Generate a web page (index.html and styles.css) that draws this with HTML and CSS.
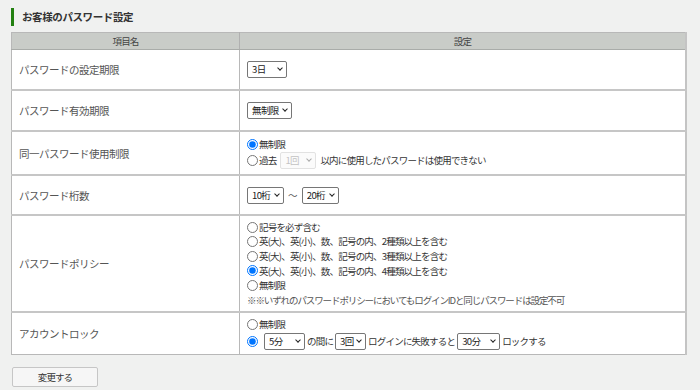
FILE: index.html
```html
<!DOCTYPE html>
<html lang="ja">
<head>
  <meta charset="UTF-8">
  <meta name="viewport" content="width=device-width, initial-scale=1.0">
  <title>お客様のパスワード設定</title>
  <link rel="stylesheet" href="styles.css">
</head>
<body>
  <div class="page">
    <h2 class="section-title">お客様のパスワード設定</h2>

    <table class="setting-table">
      <thead>
        <tr>
          <th class="col-name">項目名</th>
          <th class="col-value">設定</th>
        </tr>
      </thead>
      <tbody>
        <tr class="row-expire">
          <td class="label">パスワードの設定期限</td>
          <td class="value">
            <span class="sel-wrap">
              <select class="sel sel-days">
                <option>3日</option>
                <option>7日</option>
                <option>30日</option>
              </select>
            </span>
          </td>
        </tr>
        <tr class="row-valid">
          <td class="label">パスワード有効期限</td>
          <td class="value">
            <span class="sel-wrap">
              <select class="sel sel-valid">
                <option>無制限</option>
                <option>30日</option>
                <option>90日</option>
              </select>
            </span>
          </td>
        </tr>
        <tr class="row-reuse">
          <td class="label">同一パスワード使用制限</td>
          <td class="value">
            <label class="opt"><input type="radio" name="reuse" checked>無制限</label>
            <label class="opt"><input type="radio" name="reuse">過去
              <span class="sel-wrap is-disabled sel-gap">
                <select class="sel sel-times" disabled>
                  <option>1回</option>
                </select>
              </span>
              <span class="after-sel">以内に使用したパスワードは使用できない</span>
            </label>
          </td>
        </tr>
        <tr class="row-length">
          <td class="label">パスワード桁数</td>
          <td class="value">
            <div class="opt">
              <span class="sel-wrap">
                <select class="sel sel-len">
                  <option>10桁</option>
                </select>
              </span>
              <span class="tilde">～</span>
              <span class="sel-wrap">
                <select class="sel sel-len">
                  <option>20桁</option>
                </select>
              </span>
            </div>
          </td>
        </tr>
        <tr class="row-policy">
          <td class="label">パスワードポリシー</td>
          <td class="value">
            <label class="opt"><input type="radio" name="policy">記号を必ず含む</label>
            <label class="opt"><input type="radio" name="policy">英(大)、英(小)、数、記号の内、2種類以上を含む</label>
            <label class="opt"><input type="radio" name="policy">英(大)、英(小)、数、記号の内、3種類以上を含む</label>
            <label class="opt"><input type="radio" name="policy" checked>英(大)、英(小)、数、記号の内、4種類以上を含む</label>
            <label class="opt"><input type="radio" name="policy">無制限</label>
            <p class="note">※※いずれのパスワードポリシーにおいてもログインIDと同じパスワードは設定不可</p>
          </td>
        </tr>
        <tr class="row-lock">
          <td class="label">アカウントロック</td>
          <td class="value">
            <label class="opt"><input type="radio" name="lock">無制限</label>
            <div class="opt lock-line">
              <input type="radio" name="lock" checked>
              <span class="sel-wrap sel-gap">
                <select class="sel sel-min">
                  <option>5分</option>
                </select>
              </span>
              <span>の間に</span>
              <span class="sel-wrap">
                <select class="sel sel-count">
                  <option>3回</option>
                </select>
              </span>
              <span>ログインに失敗すると</span>
              <span class="sel-wrap">
                <select class="sel sel-lock">
                  <option>30分</option>
                </select>
              </span>
              <span>ロックする</span>
            </div>
          </td>
        </tr>
      </tbody>
    </table>

    <button class="submit-button" type="button">変更する</button>
  </div>
</body>
</html>
```

FILE: styles.css
```css
body {
  margin: 0;
  padding: 0;
  background-color: #f0f1f0;
  font-family: "Noto Sans CJK JP", "Noto Sans", sans-serif;
  color: #333;
}
.page {
  padding: 8px 13px 0 11px;
}
.section-title {
  margin: 0 0 6px 0;
  height: 18px;
  line-height: 18px;
  padding-left: 8px;
  border-left: 3px solid #228010;
  font-size: 10.5px;
  font-weight: bold;
  letter-spacing: -0.4px;
  color: #333;
}
.setting-table {
  width: 676px;
  border-collapse: collapse;
  background-color: #fff;
  border: 1px solid #b8b8b8;
  border-right: 2px solid #c4c4c4;
}
.setting-table th {
  height: 16px;
  padding: 0;
  background-color: #c9ccc8;
  border-bottom: 1px solid #a9aca9;
  font-size: 9.5px;
  font-weight: normal;
  letter-spacing: -0.8px;
  color: #444;
}
.col-name {
  width: 227px;
  border-right: 1px solid #b0b0b0;
}
.setting-table td {
  padding: 0;
  border-bottom: 2px solid #c6c6c6;
  vertical-align: middle;
}
.setting-table td.label {
  padding-left: 7px;
  font-size: 10.5px;
  letter-spacing: -0.5px;
  color: #555;
  border-right: 1px solid #b8b8b8;
}
.setting-table td.value {
  padding-left: 7px;
  font-size: 9.5px;
  letter-spacing: -0.8px;
  color: #333;
}
.row-expire td { height: 39px; }
.row-valid td { height: 39px; }
.row-reuse td { height: 42px; }
.row-length td { height: 38px; }
.row-policy td { height: 95px; }
.row-lock td { height: 41px; }
.row-lock td { border-bottom: none; }

.opt {
  display: flex;
  align-items: center;
  line-height: 14.6px;
  white-space: nowrap;
}
.opt input[type="radio"] {
  width: 11px;
  height: 11px;
  margin: 0 1px 0 0;
}

/* select box with a drawn chevron */
.sel-wrap {
  position: relative;
  display: inline-block;
  line-height: 0;
}
.sel-wrap::after {
  content: "";
  position: absolute;
  right: 5px;
  top: 5px;
  width: 3px;
  height: 3px;
  border-right: 1.5px solid #222;
  border-bottom: 1.5px solid #222;
  transform: rotate(45deg);
  pointer-events: none;
}
.sel-wrap.is-disabled::after {
  border-color: #aaa;
}
.sel {
  -webkit-appearance: none;
  appearance: none;
  height: 17px;
  padding: 0 0 0 4px;
  font-family: inherit;
  font-size: 9.5px;
  letter-spacing: -0.6px;
  line-height: 15px;
  color: #222;
  background-color: #fff;
  border: 1px solid #767676;
  border-radius: 2px;
}
.sel:disabled {
  color: #aaa;
  border-color: #d6d6d6;
  background-color: #fafafa;
}
.sel-days { width: 40px; }
.sel-valid { width: 45px; }
.sel-times { width: 36px; }
.sel-len { width: 37px; }
.sel-min { width: 41px; }
.sel-count { width: 31px; }
.sel-lock { width: 43px; }
.sel-gap {
  margin-left: 4px;
}
.after-sel {
  margin-left: 4px;
}
.tilde {
  margin: 0 5px 0 4px;
  color: #555;
}
.lock-line {
  margin-top: 1px;
  gap: 2px;
}
.lock-line input[type="radio"] {
  margin-right: 0;
}
.note {
  margin: 0;
  line-height: 14.6px;
  color: #555;
  font-size: 9.5px;
  letter-spacing: -1.1px;
}
.submit-button {
  display: block;
  margin: 12px 0 0 1px;
  width: 86px;
  height: 20px;
  padding: 0;
  background-color: #f6f6f6;
  border: 1px solid #c6c6c6;
  border-radius: 2px;
  font-family: inherit;
  font-size: 9.5px;
  letter-spacing: -0.9px;
  color: #333;
  cursor: pointer;
}
.submit-button:hover {
  background-color: #ececec;
}
```
